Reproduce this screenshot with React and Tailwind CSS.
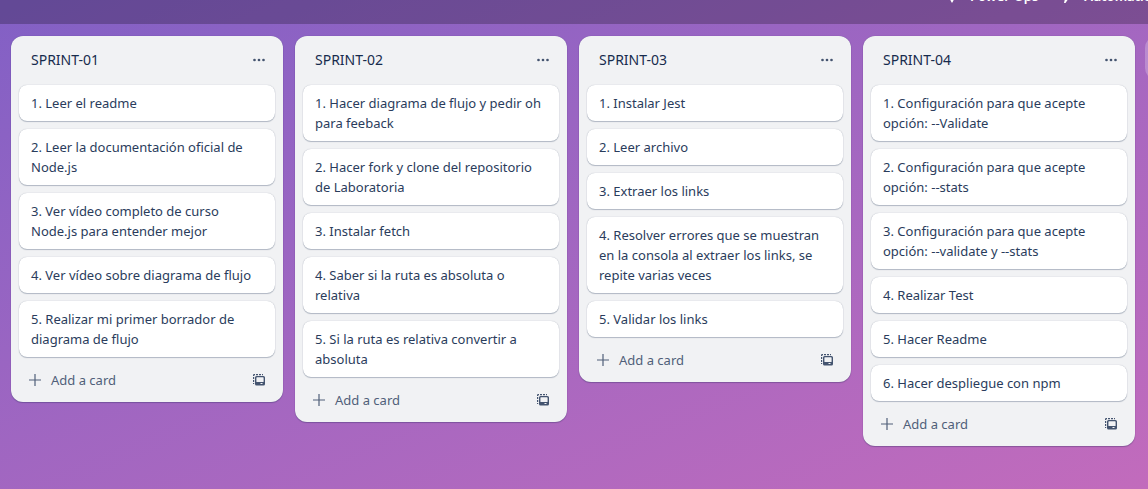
const lists = [
  {
    title: "SPRINT-01",
    cards: [
      "1. Leer el readme",
      "2. Leer la documentación oficial de Node.js",
      "3. Ver vídeo completo de curso Node.js para entender mejor",
      "4. Ver vídeo sobre diagrama de flujo",
      "5. Realizar mi primer borrador de diagrama de flujo",
    ],
  },
  {
    title: "SPRINT-02",
    cards: [
      "1. Hacer diagrama de flujo y pedir oh para feeback",
      "2. Hacer fork y clone del repositorio de Laboratoria",
      "3. Instalar fetch",
      "4. Saber si la ruta es absoluta o relativa",
      "5. Si la ruta es relativa convertir a absoluta",
    ],
  },
  {
    title: "SPRINT-03",
    cards: [
      "1. Instalar Jest",
      "2. Leer archivo",
      "3. Extraer los links",
      "4. Resolver errores que se muestran en la consola al extraer los links, se repite varias veces",
      "5. Validar los links",
    ],
  },
  {
    title: "SPRINT-04",
    cards: [
      "1. Configuración para que acepte opción: --Validate",
      "2. Configuración para que acepte opción: --stats",
      "3. Configuración para que acepte opción: --validate y --stats",
      "4. Realizar Test",
      "5. Hacer Readme",
      "6. Hacer despliegue con npm",
    ],
  },
];

function MoreIcon() {
  return (
    <svg width="16" height="16" viewBox="0 0 16 16" fill="currentColor" aria-hidden="true">
      <circle cx="3.5" cy="8" r="1.35" />
      <circle cx="8" cy="8" r="1.35" />
      <circle cx="12.5" cy="8" r="1.35" />
    </svg>
  );
}

function PlusIcon() {
  return (
    <svg width="16" height="16" viewBox="0 0 16 16" fill="currentColor" aria-hidden="true">
      <path d="M7.4 2h1.2v5.4H14v1.2H8.6V14H7.4V8.6H2V7.4h5.4z" />
    </svg>
  );
}

function TemplateIcon() {
  return (
    <svg width="16" height="16" viewBox="0 0 16 16" fill="currentColor" aria-hidden="true">
      <path d="M2 3.200A1.200 1.200 0 0 1 3.200 2H4v1.200H3.200V4H2zM5 2h2v1.200H5zM8 2h2v1.200H8zM11 2h1v1.200h-1zM2 5h1.200v2H2zM2 8h1.200v2H2zM2 11h1.200v1H2z" />
      <path
        fillRule="evenodd"
        d="M5.500 4h7A1.500 1.500 0 0 1 14 5.500v6.500a1.500 1.500 0 0 1-1.500 1.500h-7A1.500 1.500 0 0 1 4 12v-6.500A1.500 1.500 0 0 1 5.500 4zM6 5.200a.6.6 0 0 0-.6.6v3.600a.6.6 0 0 0 .6.6h6a.6.6 0 0 0 .6-.6v-3.600a.6.6 0 0 0-.6-.6zM9.500 11v1h2v-1z"
      />
    </svg>
  );
}

function RocketIcon() {
  return (
    <svg width="16" height="16" viewBox="0 0 16 16" fill="currentColor" aria-hidden="true">
      <path d="M8 0c2.500 1.800 3.500 4 3.500 6.500L13.500 9v3l-3-1.500H9.500v2L8 15l-1.500-2.500v-2h-1l-3 1.500V9l2-2.500C4.500 4 5.500 1.800 8 0z" />
    </svg>
  );
}

function BoltIcon() {
  return (
    <svg width="16" height="16" viewBox="0 0 16 16" fill="currentColor" aria-hidden="true">
      <path d="M9 1 3 8.500h4.500L6 15h1.500L13 7H8.500L10 1z" />
    </svg>
  );
}

function List({ title, cards }) {
  return (
    <section className="w-[272px] shrink-0 rounded-xl bg-[#f1f2f4] px-2 pb-1.5 shadow-[0_1px_1px_#091e4240,0_0_1px_#091e424f]">
      <header className="flex items-center justify-between py-2 pl-3">
        <h2 className="text-sm leading-5 font-normal text-[#172b4d]">{title}</h2>
        <button type="button" aria-label="List actions" className="grid size-8 place-items-center rounded-lg text-[#44546f]">
          <MoreIcon />
        </button>
      </header>
      <ol className="flex flex-col gap-2 pt-px">
        {cards.map((card) => (
          <li
            key={card}
            className="rounded-lg bg-white px-3 py-2 text-[13px] leading-5 text-[#2a3c5c] shadow-[0_1px_1px_#091e4240,0_0_1px_#091e424f]"
          >
            {card}
          </li>
        ))}
      </ol>
      <footer className="flex items-center justify-between pt-[7px]">
        <button type="button" className="flex h-8 items-center gap-2 rounded-lg pl-2 text-[13px] leading-5 text-[#505f79]">
          <PlusIcon />
          Add a card
        </button>
        <button type="button" aria-label="Create from template" className="grid size-8 place-items-center rounded-lg text-[#44546f]">
          <TemplateIcon />
        </button>
      </footer>
    </section>
  );
}

export default function App() {
  return (
    <div className="flex min-h-screen flex-col overflow-hidden bg-linear-to-br from-[#8260c5] to-[#c26bbc] font-['Noto_Sans','Open_Sans',sans-serif]">
      <nav className="flex h-6 items-end justify-end gap-5 overflow-hidden bg-black/24 pb-3 text-[13px] leading-5 font-semibold text-white">
        <button type="button" className="flex h-8 shrink-0 items-center gap-2.5">
          <RocketIcon />
          Power-Ups
        </button>
        <button type="button" className="-mr-3 flex h-8 shrink-0 items-center gap-2.5">
          <BoltIcon />
          Automation
        </button>
      </nav>
      <main className="flex items-start gap-2.5 py-3 pl-[11px]">
        <div className="flex shrink-0 items-start gap-3">
          {lists.map((list) => (
            <List key={list.title} {...list} />
          ))}
        </div>
        <button type="button" aria-label="Add another list" className="h-11 w-[272px] shrink-0 rounded-xl bg-white/24" />
      </main>
    </div>
  );
}
